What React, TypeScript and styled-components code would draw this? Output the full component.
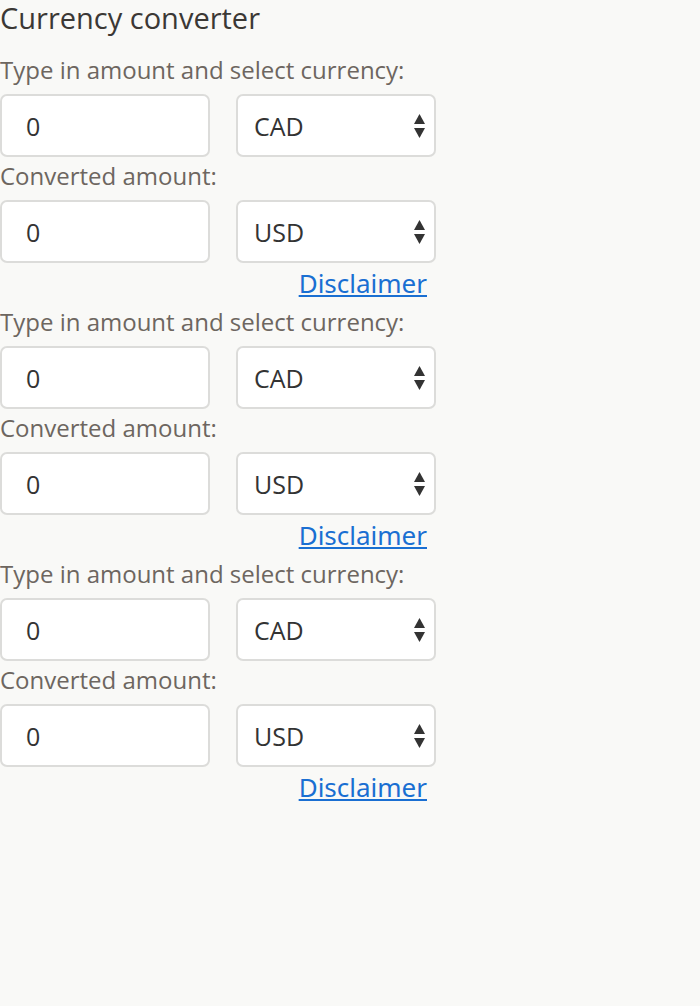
import styled, { createGlobalStyle } from 'styled-components';

const GlobalStyle = createGlobalStyle`
  body {
    margin: 0;
    background: #f9f9f7;
    font-family: 'Open Sans', Lato, sans-serif;
  }
`;

const Page = styled.div`
  display: flex;
  flex-direction: column;
  width: 436px;
`;

const Title = styled.h1`
  margin: 0 0 19px;
  font-size: 29px;
  font-weight: 400;
  line-height: 36px;
  color: #3b3835;
`;

const Converter = styled.section`
  display: flex;
  flex-direction: column;
`;

const Label = styled.label`
  font-size: 24px;
  line-height: 30px;
  color: #6d6660;
  margin-bottom: 9px;
  white-space: nowrap;
`;

const Row = styled.div`
  display: grid;
  grid-template-columns: 210px 200px;
  column-gap: 26px;
  margin-bottom: 4px;
`;

const Field = styled.div`
  height: 63px;
  box-sizing: border-box;
  border: 2px solid #dcdcda;
  border-radius: 7px;
  background: #fff;
  display: flex;
  align-items: center;
  font-size: 25px;
  color: #333;
`;

const AmountInput = styled(Field)`
  padding-left: 24px;
`;

const CurrencySelect = styled(Field)`
  padding: 0 9px 0 16px;
  justify-content: space-between;
`;

const Arrows = () => (
  <svg width="11" height="24" viewBox="0 0 11 24">
    <path d="M5.5 0 L11 10 H0 Z" fill="#333" />
    <path d="M5.5 24 L11 14 H0 Z" fill="#333" />
  </svg>
);

const Disclaimer = styled.a`
  align-self: flex-end;
  margin-right: 9px;
  margin-bottom: 8px;
  font-family: 'Noto Sans', 'Open Sans', sans-serif;
  font-size: 26px;
  line-height: 32px;
  color: #1a6fd2;
  text-decoration: underline;
`;

const Block = () => (
  <Converter>
    <Label>Type in amount and select currency:</Label>
    <Row>
      <AmountInput>0</AmountInput>
      <CurrencySelect>
        CAD
        <Arrows />
      </CurrencySelect>
    </Row>
    <Label>Converted amount:</Label>
    <Row>
      <AmountInput>0</AmountInput>
      <CurrencySelect>
        USD
        <Arrows />
      </CurrencySelect>
    </Row>
    <Disclaimer href="#">Disclaimer</Disclaimer>
  </Converter>
);

export default function App() {
  return (
    <>
      <GlobalStyle />
      <Page>
        <Title>Currency converter</Title>
        <Block />
        <Block />
        <Block />
      </Page>
    </>
  );
}
